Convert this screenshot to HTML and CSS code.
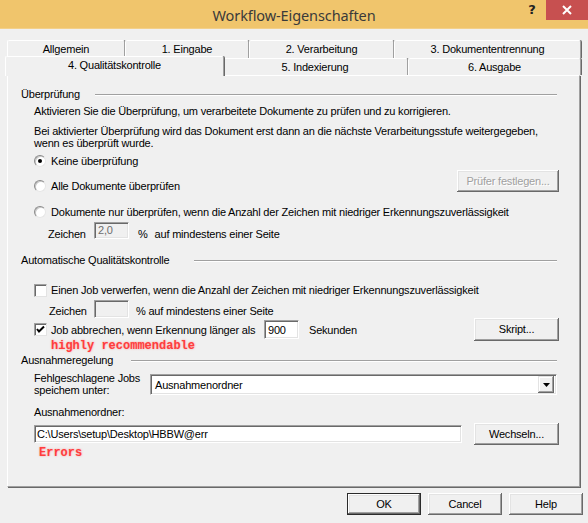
FILE: index.html
```html
<!DOCTYPE html>
<html lang="de">
<head>
<meta charset="utf-8">
<title>Workflow-Eigenschaften</title>
<link rel="stylesheet" href="styles.css">
</head>
<body>
<div class="window">
  <header class="titlebar">
    <div class="tb-spacer"></div>
    <div class="title">Workflow-Eigenschaften</div>
    <div class="caption-btns">
      <span class="help">?</span>
      <span class="close"><svg width="10" height="10" viewBox="0 0 10 10"><path d="M1 1 L9 9 M9 1 L1 9" stroke="#fff" stroke-width="2" fill="none"/></svg></span>
    </div>
  </header>

  <div class="tabs">
    <div class="tabrow row1">
      <div class="tab t-allg">Allgemein</div>
      <div class="tab t-eing">1. Eingabe</div>
      <div class="tab t-verarb">2. Verarbeitung</div>
      <div class="tab t-dok">3. Dokumententrennung</div>
    </div>
    <div class="tabrow row2">
      <div class="tab sel t-qual">4. Qualitätskontrolle</div>
      <div class="tab t-index">5. Indexierung</div>
      <div class="tab t-ausg">6. Ausgabe</div>
    </div>
  </div>

  <div class="panel">
    <div class="group-title m-g1"><span>Überprüfung</span><i class="gline gl1"></i></div>
    <p class="txt indent m-akt">Aktivieren Sie die Überprüfung, um verarbeitete Dokumente zu prüfen und zu korrigieren.</p>
    <p class="txt two indent m-bei">Bei aktivierter Überprüfung wird das Dokument erst dann an die nächste Verarbeitungsstufe weitergegeben,<br>wenn es überprüft wurde.</p>
    <div class="opt indent m-r1"><span class="radio on"></span><span>Keine überprüfung</span></div>
    <div class="row-r2 indent m-r2">
      <div class="opt shift-r2"><span class="radio"></span><span>Alle Dokumente überprüfen</span></div>
      <button class="btn disabled b-pruefer">Prüfer festlegen...</button>
    </div>
    <div class="opt indent m-r3"><span class="radio"></span><span>Dokumente nur überprüfen, wenn die Anzahl der Zeichen mit niedriger Erkennungszuverlässigkeit</span></div>
    <div class="zrow m-z1">
      <span class="zlabel z1">Zeichen</span>
      <span class="edit off e-z1">2,0</span>
      <span class="ztext pct1">%</span>
      <span class="ztext auf1">auf mindestens einer Seite</span>
    </div>

    <div class="group-title m-g2"><span>Automatische Qualitätskontrolle</span><i class="gline gl2"></i></div>
    <div class="opt indent m-c1"><span class="check"></span><span>Einen Job verwerfen, wenn die Anzahl der Zeichen mit niedriger Erkennungszuverlässigkeit</span></div>
    <div class="zrow m-z2">
      <span class="zlabel z2">Zeichen</span>
      <span class="edit off e-z2"></span>
      <span class="ztext2 pct2">% auf mindestens einer Seite</span>
    </div>
    <div class="jobrow indent m-job">
      <div class="opt w-job"><span class="check on"><svg width="11" height="11" viewBox="0 0 11 11"><path d="M2 5 L4 7.5 L9 2.5" stroke="#000" stroke-width="2" fill="none"/></svg></span><span>Job abbrechen, wenn Erkennung länger als</span></div>
      <span class="edit e-900">900</span>
      <span class="sek">Sekunden</span>
      <button class="btn b-skript">Skript...</button>
    </div>
    <div class="note m-high">highly recommendable</div>

    <div class="group-title m-g3"><span>Ausnahmeregelung</span><i class="gline gl3"></i></div>
    <div class="fehlrow indent m-fehl">
      <p class="txt two fehl-label">Fehlgeschlagene Jobs<br>speichem unter:</p>
      <div class="combo">
        <span class="combo-text">Ausnahmenordner</span>
        <span class="combo-btn"><svg width="7" height="4" viewBox="0 0 7 4"><path d="M0 0 H7 L3.5 4 Z" fill="#000"/></svg></span>
      </div>
    </div>
    <p class="txt indent m-ausn">Ausnahmenordner:</p>
    <div class="pathrow indent m-path">
      <span class="edit e-path">C:\Users\setup\Desktop\HBBW@err</span>
      <button class="btn b-wechseln">Wechseln...</button>
    </div>
    <div class="note m-err">Errors</div>
  </div>

  <div class="buttons">
    <button class="btn dlg default">OK</button>
    <button class="btn dlg">Cancel</button>
    <button class="btn dlg">Help</button>
  </div>
</div>
</body>
</html>
```

FILE: styles.css
```css
* { box-sizing: border-box; }
html, body { margin: 0; padding: 0; }
body {
  background: #f0f0f0;
  font-family: "Liberation Sans", Arial, sans-serif;
  font-size: 11px;
  letter-spacing: -0.2px;
  color: #000;
}
.window { width: 588px; height: 523px; overflow: hidden; }

/* title bar */
.titlebar {
  height: 29px;
  background: #f0c56c;
  border-bottom: 1px solid #f3d08a;
  display: grid;
  grid-template-columns: 1fr auto 1fr;
}
.title {
  font-family: "Noto Sans", "Open Sans", sans-serif;
  font-size: 14.5px;
  letter-spacing: -0.1px;
  line-height: 28px;
  color: #3a3a3a;
  padding-top: 1px;
}
.caption-btns { display: flex; justify-content: flex-end; align-items: flex-start; }
.help {
  width: 14px;
  margin-top: 3px;
  margin-right: 7px;
  text-align: center;
  font-family: "DejaVu Sans", sans-serif;
  font-weight: bold;
  font-size: 13px;
  line-height: 14px;
  color: #222;
  letter-spacing: 0;
}
.close {
  width: 42px; height: 20px;
  background: #c75050;
  display: flex; align-items: center; justify-content: center;
}

/* tabs */
.tabs { margin-top: 11px; }
.tabrow { display: flex; padding-left: 7px; }
.row2 { height: 17px; align-items: flex-end; position: relative; z-index: 1; }
.tab {
  height: 18px;
  border-top: 1px solid #fff;
  border-left: 1px solid #fff;
  border-right: 1px solid #a0a0a0;
  box-shadow: 1px 0 0 #696969;
  border-radius: 2px 2px 0 0;
  background: #f0f0f0;
  text-align: center;
  line-height: 16px;
}
.row2 .tab { height: 17px; line-height: 16px; }
.row2 .tab.sel {
  height: 20px;
  margin: 0 -2px -1px -2px;
  line-height: 14px;
  padding-top: 1px;
  position: relative;
  z-index: 2;
}
.t-allg { width: 118px; }
.t-eing { width: 124px; }
.t-verarb { width: 145px; }
.t-dok { width: 187px; }
.t-qual { width: 219px; }
.t-index { width: 186px; }
.t-ausg { width: 173px; }

/* panel */
.panel {
  margin: 0 8px 0 7px;
  height: 412px;
  border: 1px solid;
  border-color: #fff #a0a0a0 #a0a0a0 #fff;
  box-shadow: 1px 1px 0 #696969;
  padding: 0 20px 0 13px;
  display: flex;
  flex-direction: column;
}
.group-title { display: flex; align-items: center; height: 13px; line-height: 13px; }
.gline {
  flex: 1;
  height: 2px;
  border-top: 1px solid #a0a0a0;
  border-bottom: 1px solid #fff;
  margin-right: 2px;
}
.gl1 { margin-left: 15px; }
.gl2 { margin-left: 24px; }
.gl3 { margin-left: 18px; }

.txt { margin: 0; line-height: 13px; white-space: nowrap; }
.txt.two { line-height: 12px; }
.indent { margin-left: 13px; }

.opt { display: flex; align-items: center; height: 14px; line-height: 14px; white-space: nowrap; }
.radio {
  width: 12px; height: 12px;
  border-radius: 50%;
  background: #fff;
  border: 1px solid;
  border-color: #8a8a8a #e6e6e6 #e6e6e6 #8a8a8a;
  box-shadow: inset 1px 1px 0 #c8c8c8;
  margin-right: 5px;
  flex: none;
  display: flex; align-items: center; justify-content: center;
}
.radio.on::after {
  content: "";
  width: 4px; height: 4px;
  border-radius: 50%;
  background: #000;
}
.check {
  width: 13px; height: 13px;
  background: #fff;
  border: 1px solid;
  border-color: #a0a0a0 #e3e3e3 #e3e3e3 #a0a0a0;
  box-shadow: inset 1px 1px 0 #696969;
  margin-right: 4px;
  flex: none;
  display: flex; align-items: center; justify-content: center;
}

/* row margins */
.m-g1 { margin-top: 12px; }
.m-akt { margin-top: 4px; }
.m-bei { margin-top: 7px; }
.m-r1 { margin-top: 5px; }
.m-r2 { margin-top: 2px; }
.m-r3 { margin-top: 13px; }
.m-z1 { margin-top: 3px; }
.m-g2 { margin-top: 14px; }
.m-c1 { margin-top: 16px; }
.m-z2 { margin-top: 3px; }
.m-job { margin-top: 0; }
.m-high { margin-top: -2px; }
.m-g3 { margin-top: 1px; }
.m-fehl { margin-top: 5px; }
.m-ausn { margin-top: 10px; }
.m-path { margin-top: 4px; }
.m-err { margin-top: 1px; }

.row-r2 { display: flex; align-items: flex-start; height: 22px; }
.shift-r2 { margin-top: 9px; }

/* buttons */
.btn {
  font-family: inherit;
  font-size: 11px;
  letter-spacing: -0.2px;
  color: #000;
  background: #f0f0f0;
  border: none;
  padding: 0;
  box-shadow: inset -1px -1px 0 #696969, inset 1px 1px 0 #fff, inset -2px -2px 0 #a0a0a0, inset 2px 2px 0 #e3e3e3;
  display: flex; align-items: center; justify-content: center;
  line-height: 13px;
}
.btn.disabled { color: #a0a0a0; text-shadow: 1px 1px 0 #fff; }
.b-pruefer { width: 102px; height: 22px; margin-left: auto; }
.b-skript { width: 85px; height: 23px; margin-left: auto; }
.b-wechseln { width: 85px; height: 22px; margin-left: auto; }

/* edits */
.edit {
  background: #fff;
  border: 1px solid;
  border-color: #a0a0a0 #fff #fff #a0a0a0;
  box-shadow: inset 1px 1px 0 #696969, inset -1px -1px 0 #e3e3e3;
  padding-left: 3px;
  display: flex; align-items: center;
  white-space: nowrap;
  flex: none;
}
.edit.off { background: #f0f0f0; color: #6d6d6d; }

.zrow { display: flex; align-items: flex-start; height: 18px; white-space: nowrap; }
.zlabel { width: 73px; padding-left: 27px; line-height: 13px; }
.z1 { margin-top: 6px; }
.z2 { margin-top: 5px; padding-left: 28px; }
.e-z1 { width: 35px; height: 17px; align-items: flex-start; padding-top: 1px; }
.e-z2 { width: 35px; height: 18px; }
.ztext { line-height: 13px; margin-top: 6px; }
.pct1 { margin-left: 9px; }
.auf1 { margin-left: 7px; }
.ztext2 { line-height: 13px; margin-top: 5px; }
.pct2 { margin-left: 7px; }

.jobrow { display: flex; align-items: center; height: 23px; white-space: nowrap; }
.w-job { width: 230px; }
.e-900 { width: 35px; height: 19px; }
.sek { margin-left: 10px; }

.note {
  font-family: "Liberation Mono", "Courier New", monospace;
  font-weight: bold;
  font-size: 12px;
  letter-spacing: 0;
  line-height: 14px;
  height: 14px;
  color: #ff3d3d;
  text-shadow: 0 0 2px rgba(255, 90, 90, 0.6);
  white-space: nowrap;
}
.m-high { margin-left: 30px; }
.m-err { margin-left: 18px; }

.fehlrow { display: flex; align-items: flex-start; height: 24px; }
.fehl-label { width: 116px; }
.combo {
  width: 407px; height: 21px;
  margin-top: 2px;
  background: #fff;
  border: 1px solid;
  border-color: #a0a0a0 #fff #fff #a0a0a0;
  box-shadow: inset 1px 1px 0 #696969, inset -1px -1px 0 #e3e3e3;
  display: flex; align-items: center;
  padding: 2px 2px 2px 4px;
}
.combo-text { flex: 1; }
.combo-btn {
  width: 16px; height: 17px;
  background: #f0f0f0;
  box-shadow: inset -1px -1px 0 #696969, inset 1px 1px 0 #e3e3e3, inset -2px -2px 0 #a0a0a0, inset 2px 2px 0 #fff;
  display: flex; align-items: center; justify-content: center;
}

.pathrow { display: flex; align-items: center; height: 22px; }
.e-path { width: 428px; height: 18px; padding-left: 2px; }

/* dialog buttons */
.buttons {
  display: flex;
  justify-content: flex-end;
  gap: 7px;
  padding-right: 5px;
  margin-top: 6px;
}
.btn.dlg { width: 74px; height: 22px; }
.btn.default {
  border: 1px solid #2b2b2b;
  box-shadow: inset -1px -1px 0 #696969, inset 1px 1px 0 #fff, inset -2px -2px 0 #a0a0a0, inset 2px 2px 0 #e3e3e3;
}
```
